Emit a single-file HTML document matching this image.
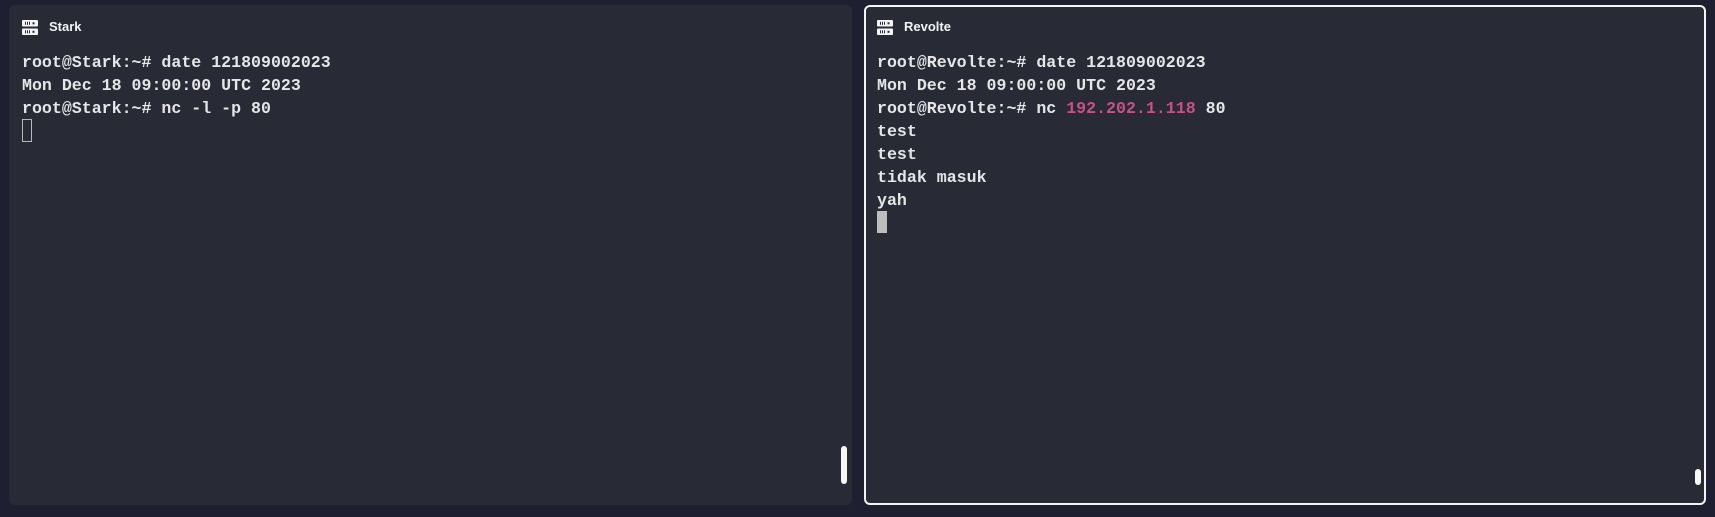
<!DOCTYPE html>
<html><head><meta charset="utf-8"><style>
html,body{margin:0;padding:0;width:1715px;height:517px;background:#1e1f30;overflow:hidden}
.p{position:absolute;top:5px;height:500px;background:#282a36;border-radius:6px;box-sizing:border-box}
.t{position:absolute;top:19px;font:600 13px "Liberation Sans",sans-serif;color:#f4f4f4}
.ic{position:absolute;top:20px}
pre{position:absolute;margin:0;top:51px;font:bold 16.6px/23px "Liberation Mono",monospace;color:#e6e6e6;letter-spacing:0}
.pk{color:#c8508a}
.sb{position:absolute;background:#f8f8f2;border-radius:3px}
</style></head><body>
<div class="p" style="left:9px;width:843px"></div>
<div class="p" style="left:864px;width:842px;border:2px solid #f4f4f4"></div>

<svg class="ic" style="left:22px" width="16" height="16" viewBox="0 0 16 16">
<rect x="0" y="0" width="16" height="6.5" rx="1" fill="#f4f4f4"/><rect x="0" y="8.5" width="16" height="6.5" rx="1" fill="#f4f4f4"/>
<g fill="#282a36"><rect x="3" y="1.8" width="1" height="3"/><rect x="5" y="1.8" width="1" height="3"/><rect x="7" y="1.8" width="1" height="3"/><rect x="10.5" y="2.3" width="2" height="2"/>
<rect x="3" y="10.3" width="1" height="3"/><rect x="5" y="10.3" width="1" height="3"/><rect x="7" y="10.3" width="1" height="3"/><rect x="10.5" y="10.8" width="2" height="2"/></g></svg>
<div class="t" style="left:49px">Stark</div>

<svg class="ic" style="left:877px" width="16" height="16" viewBox="0 0 16 16">
<rect x="0" y="0" width="16" height="6.5" rx="1" fill="#f4f4f4"/><rect x="0" y="8.5" width="16" height="6.5" rx="1" fill="#f4f4f4"/>
<g fill="#282a36"><rect x="3" y="1.8" width="1" height="3"/><rect x="5" y="1.8" width="1" height="3"/><rect x="7" y="1.8" width="1" height="3"/><rect x="10.5" y="2.3" width="2" height="2"/>
<rect x="3" y="10.3" width="1" height="3"/><rect x="5" y="10.3" width="1" height="3"/><rect x="7" y="10.3" width="1" height="3"/><rect x="10.5" y="10.8" width="2" height="2"/></g></svg>
<div class="t" style="left:904px">Revolte</div>

<pre style="left:22px">root@Stark:~# date 121809002023
Mon Dec 18 09:00:00 UTC 2023
root@Stark:~# nc -l -p 80</pre>
<div style="position:absolute;left:22px;top:119px;width:8px;height:21px;border:1px solid #b8b8b8"></div>

<pre style="left:877px">root@Revolte:~# date 121809002023
Mon Dec 18 09:00:00 UTC 2023
root@Revolte:~# nc <span class="pk">192.202.1.118</span> 80
test
test
tidak masuk
yah</pre>
<div style="position:absolute;left:877px;top:211px;width:10px;height:22px;background:#bdbdbd"></div>

<div class="sb" style="left:841px;top:446px;width:6px;height:38px"></div>
<div class="sb" style="left:1695px;top:469px;width:6px;height:16px"></div>
</body></html>
